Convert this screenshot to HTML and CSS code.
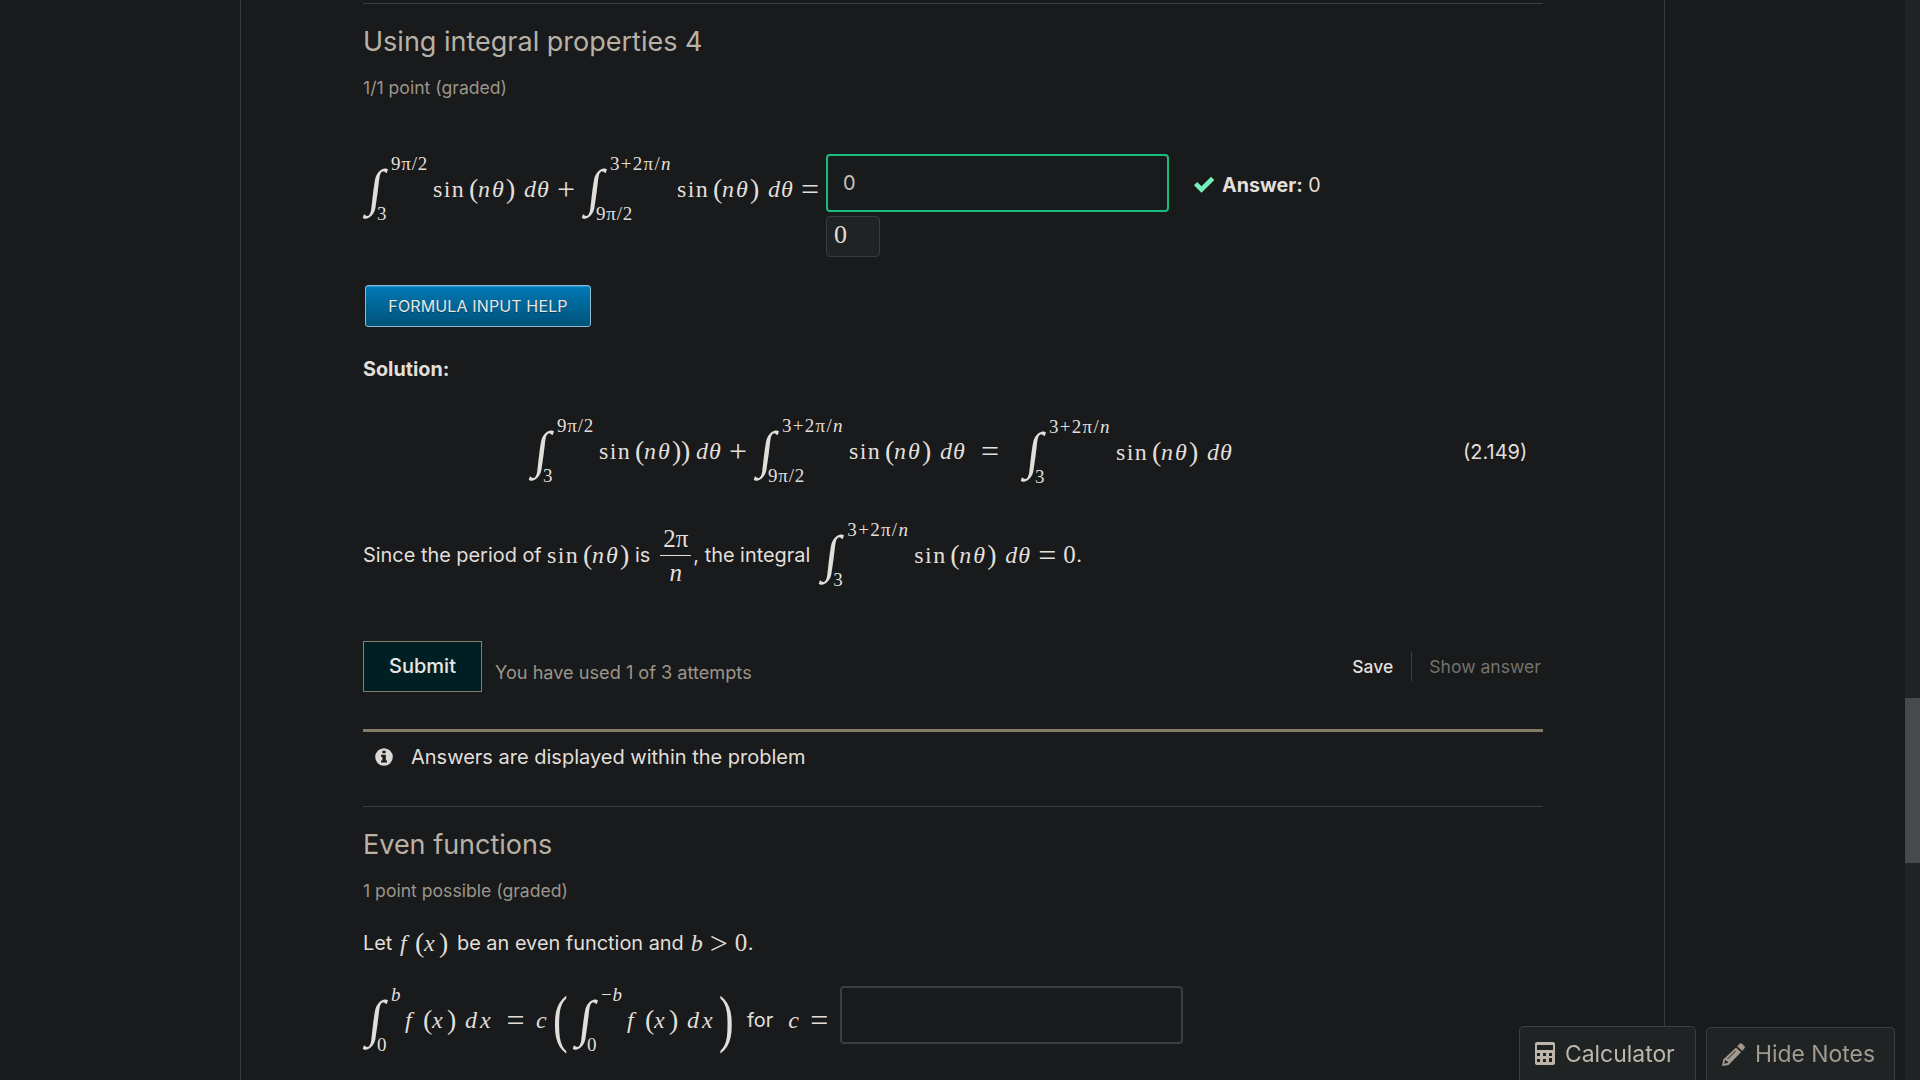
FILE: index.html
```html
<!DOCTYPE html>
<html lang="en">
<head>
<meta charset="utf-8">
<title>Integral properties</title>
<link rel="stylesheet" href="styles.css">
</head>
<body>
<div class="page">
<main class="content">
  <section class="problem first">
    <h3 class="title">Using integral properties 4</h3>
    <p class="progress">1/1 point (graded)</p>
    <div class="row answer-row">
      <span class="math"><span class="int">∫</span><span class="limits short"><span>9π/2</span><span>3</span></span><span class="fn">sin</span><span class="par">(</span><i class="nt">nθ</i><span class="par">)</span><i class="dt">dθ</i><span class="op">+</span><span class="int">∫</span><span class="limits long"><span>3+2π/<i>n</i></span><span>9π/2</span></span><span class="fn">sin</span><span class="par">(</span><i class="nt">nθ</i><span class="par">)</span><i class="dt">dθ</i><span class="op">=</span></span>
      <div class="entry">
        <input class="field correct" value="0" aria-label="answer">
        <div class="preview">0</div>
      </div>
      <svg class="check" viewBox="0 0 22 17"><path d="M1 9.3 4.2 6 8.5 10.2 18 0.8 21.3 4 8.5 16.7Z" fill="#75f0bb"/></svg>
      <span class="result"><b>Answer:</b> 0</span>
    </div>
    <button class="help">FORMULA INPUT HELP</button>
    <p class="solution">Solution:</p>
    <div class="row equation">
      <span class="math"><span class="int">∫</span><span class="limits short"><span>9π/2</span><span>3</span></span><span class="fn">sin</span><span class="par">(</span><i class="nt">nθ</i><span class="par">)</span><span class="par">)</span><i class="dt tight">dθ</i><span class="op">+</span><span class="int">∫</span><span class="limits long"><span>3+2π/<i>n</i></span><span>9π/2</span></span><span class="fn">sin</span><span class="par">(</span><i class="nt">nθ</i><span class="par">)</span><i class="dt">dθ</i><span class="op wide">=</span></span>
      <span class="math lower"><span class="int">∫</span><span class="limits long"><span>3+2π/<i>n</i></span><span>3</span></span><span class="fn">sin</span><span class="par">(</span><i class="nt">nθ</i><span class="par">)</span><i class="dt">dθ</i></span>
      <span class="number">(2.149)</span>
    </div>
    <div class="row sentence">
      <span class="words since">Since the period of</span>
      <span class="math"><span class="fn">sin</span><span class="par">(</span><i class="nt">nθ</i><span class="par">)</span></span>
      <span class="words is">is</span>
      <span class="frac"><span>2π</span><i>n</i></span>
      <span class="words integral">, the integral</span>
      <span class="math"><span class="int">∫</span><span class="limits long"><span>3+2π/<i>n</i></span><span>3</span></span><span class="fn">sin</span><span class="par">(</span><i class="nt">nθ</i><span class="par">)</span><i class="dt">dθ</i><span class="op">=</span><span class="zero">0</span></span>
      <span class="words">.</span>
    </div>
    <div class="row actions">
      <button class="submit">Submit</button>
      <span class="attempts">You have used 1 of 3 attempts</span>
      <span class="save">Save</span>
      <span class="show">Show answer</span>
    </div>
    <div class="row notice">
      <svg class="info" viewBox="0 0 18 18"><circle cx="9" cy="9" r="8.8" fill="#dcd9d4"/><path d="M7.4 2.7h3.2v2.6H7.4zM6 6.8h4.8v5.7H12v2H6v-2h1.4V8.8H6z" fill="#181a1b"/></svg>
      <span>Answers are displayed within the problem</span>
    </div>
  </section>
  <section class="problem second">
    <h3 class="title">Even functions</h3>
    <p class="progress">1 point possible (graded)</p>
    <div class="row let">
      <span class="words let-word">Let</span>
      <span class="math"><i class="f near">f</i><span class="par">(</span><i class="x">x</i><span class="par">)</span></span>
      <span class="words even">be an even function and</span>
      <span class="math"><i class="b">b</i><span class="op gt">&gt;</span><span class="zero">0</span></span>
      <span class="words">.</span>
    </div>
    <div class="row even-row">
      <span class="math"><span class="int">∫</span><span class="limits single"><i>b</i><span>0</span></span><i class="f">f</i><span class="par">(</span><i class="x">x</i><span class="par">)</span><i class="dx">dx</i><span class="op eq">=</span><i class="c">c</i><span class="big">(</span><span class="int">∫</span><span class="limits minus"><span>−<i>b</i></span><span>0</span></span><i class="f">f</i><span class="par">(</span><i class="x">x</i><span class="par">)</span><i class="dx">dx</i><span class="big close">)</span></span>
      <span class="words for">for</span>
      <span class="math"><i class="c last">c</i><span class="op">=</span></span>
      <input class="field" aria-label="c">
    </div>
  </section>
</main>
</div>
<div class="tools">
  <button class="tool calculator"><svg viewBox="0 0 20 23"><path fill-rule="evenodd" fill="#bdb6ab" d="M2 0h16q2 0 2 2v19q0 2-2 2H2q-2 0-2-2V2q0-2 2-2ZM2 3v5h16V3ZM2 11v3h3v-3ZM8 11v3h3v-3ZM14 11v3h3v-3ZM2 17v3h3v-3ZM8 17v3h3v-3ZM14 16v4h3v-4Z"/></svg>Calculator</button>
  <button class="tool notes"><svg viewBox="0 0 23 23"><path fill-rule="evenodd" fill="#a29a8e" d="M14 4.5 19 9.3 6.5 22 0 23 1.3 16.6ZM3 17.3 2.2 20.7 5.6 20 6 18.5 4.3 18.3 4 17Z M15.2 3.2 17.6.8q1.2-1.2 2.4 0l2.3 2.3q1.2 1.2 0 2.4L20.2 8Z"/><path d="M5.5 16 13.5 8" stroke="#1f2324"/></svg>Hide Notes</button>
</div>
<div class="scrollbar"><div class="thumb"></div></div>
</body>
</html>
```
FILE: styles.css
```css
* { box-sizing: border-box; }
html { overflow: hidden; }
body {
  margin: 0;
  height: 1080px;
  overflow: hidden;
  background: #181a1b;
  color: #e2dfda;
  font: 20px Inter, sans-serif;
}
h3, p { margin: 0; font-weight: 400; }
button, input { font-family: inherit; margin: 0; }
.page {
  width: 1425px;
  height: 1080px;
  margin-left: 240px;
  padding: 3px 121px 0 122px;
  border: solid #363b3d;
  border-width: 0 1px;
}
.problem { border-top: 1px solid #3a3e41; }
.first { height: 803px; }
.title {
  height: 76px;
  line-height: 76px;
  font-size: 27px;
  color: #b8b1a6;
}
.progress {
  height: 16px;
  line-height: 16px;
  font-size: 17.6px;
  color: #9d9589;
}
.row { display: flex; align-items: center; white-space: nowrap; }

/* Formulas */
.math {
  display: inline-flex;
  align-items: center;
  height: 68px;
  font: 24px/68px "Liberation Serif", serif;
}
.math > * { flex: none; }
.int {
  width: 13px;
  padding: 0 0 3px 6px;
  font-size: 51px;
  transform: skewX(-7deg);
}
.limits {
  display: flex;
  flex-direction: column;
  justify-content: space-between;
  height: 68px;
  font-size: 19px;
  line-height: 18px;
  letter-spacing: .8px;
}
.limits > :first-child { padding-left: 15px; }
.limits > :last-child { padding-left: 1px; }
.short { width: 57px; }
.long { width: 82px; }
.long > :first-child { letter-spacing: 1.3px; }
.single { width: 29px; }
.minus { width: 41px; }
.fn { width: 36px; letter-spacing: 1.4px; }
.par { width: 9px; font-size: 28px; }
.nt { width: 28px; letter-spacing: 2px; }
.dt { width: 26px; margin-left: 9px; letter-spacing: 1px; }
.tight { margin-left: 6px; }
.op { width: 32px; font-size: 32px; text-align: center; }
.wide { width: 48px; }

.answer-row { height: 188px; align-items: flex-start; padding-top: 58px; }
.answer-row .math { margin-top: 1px; width: 463px; }
.entry { width: 343px; }
.field {
  display: block;
  width: 343px;
  height: 58px;
  padding: 0 15px;
  border: 2px solid #3b3e40;
  border-radius: 4px;
  background: #181a1b;
  color: #c8c3ba;
  font-size: 20px;
}
.correct { border-color: #1abc7b; }
.preview {
  width: 54px;
  height: 41px;
  margin-top: 4px;
  padding-left: 7px;
  border: 1px solid #373c3e;
  border-radius: 4px;
  background: #1f2324;
  font: 26px/36px "Liberation Serif", serif;
}
.check { width: 22px; height: 17px; margin: 22px 7px 0 24px; }
.result { line-height: 24px; margin-top: 19px; font-size: 19.7px; }
.help {
  display: block;
  width: 226px;
  height: 42px;
  margin: 1px 0 0 2px;
  padding: 0;
  border: 1px solid #8fbbd2;
  border-radius: 3px;
  background: linear-gradient(#0079b5, #00527a);
  box-shadow: inset 0 1px 0 #1097e0;
  color: #e8e6e3;
  font-size: 16px;
  letter-spacing: .13px;
  text-shadow: 0 1px 0 #003c57;
}
.solution { height: 83px; line-height: 84px; font-weight: 700; font-size: 19.8px; }
.equation { height: 82px; padding-left: 166px; }
.equation .math { width: 492px; }
.equation .lower { width: 442px; padding-top: 2px; }
.number { padding-top: 1px; }
.sentence { height: 125px; padding-top: 1px; }
.words { font-size: 19.9px; line-height: 24px; }
.since { width: 184px; }
.is { margin: 0 10px 0 6px; }
.frac {
  display: flex;
  flex-direction: column;
  align-items: center;
  width: 31px;
  font: 25px/33px "Liberation Serif", serif;
}
.frac span { border-bottom: 1px solid #e2dfda; width: 31px; text-align: center; }
.integral { width: 128px; padding-left: 2px; }
.zero { font-size: 25px; width: 13px; }
.actions { height: 51px; margin-top: 24px; }
.submit {
  width: 119px;
  height: 51px;
  padding: 0 0 1px;
  border: 1px solid #857d6f;
  background: #001f23;
  color: #e8e6e3;
  font-size: 20px;
  font-weight: 500;
}
.attempts { margin: 11px auto 0 13px; color: #9d9589; font-size: 18.15px; }
.save { padding-right: 18px; border-right: 1px solid #3c4042; font-size: 17.5px; line-height: 29px; font-weight: 500; }
.show { padding: 0 2px 0 17px; color: #74736f; font-size: 17.6px; }
.notice { height: 77px; margin-top: 37px; padding: 0 0 24px 12px; border-top: 3px solid #857b6b; }
.info { width: 18px; height: 18px; margin-right: 18px; }
.let { height: 72px; margin-top: 8px; }
.let-word { width: 37px; }
.f { width: 18px; }
.near { width: 15px; }
.x { width: 15px; }
.dx { width: 30px; margin-left: 9px; letter-spacing: 3px; }
.c { width: 15px; }
.even { margin: 0 7px 0 9px; }
.b { width: 12px; }
.eq { width: 41px; }
.big { width: 22px; padding-left: 2px; font-size: 44px; transform: scaleY(1.42); }
.close { padding-left: 0; margin-left: 2px; }
.for { margin: 2px 15px 0 6px; }
.even-row { height: 80px; }
.even-row .math { padding-top: 2px; }
.even-row .field { margin: 0 0 8px 5px; }

/* Docked controls */
.tools {
  position: fixed;
  right: 25px;
  bottom: 0;
  display: flex;
  align-items: flex-end;
  gap: 10px;
}
.tool {
  display: flex;
  align-items: center;
  gap: 10px;
  height: 53px;
  padding: 0 0 0 15px;
  border: 1px solid #3a3f41;
  border-bottom: 0;
  border-radius: 5px 5px 0 0;
  background: #1f2324;
  font-size: 22.9px;
}
.tool svg { width: 20px; height: 23px; }
.calculator { width: 177px; height: 54px; color: #bdb6ab; }
.notes { width: 189px; color: #a29a8e; }
.notes svg { width: 23px; }
.scrollbar {
  position: fixed;
  top: 0;
  right: 0;
  width: 15px;
  height: 1080px;
  padding-top: 698px;
  background: #1f2324;
}
.thumb { height: 165px; background: #454a4d; }
```
